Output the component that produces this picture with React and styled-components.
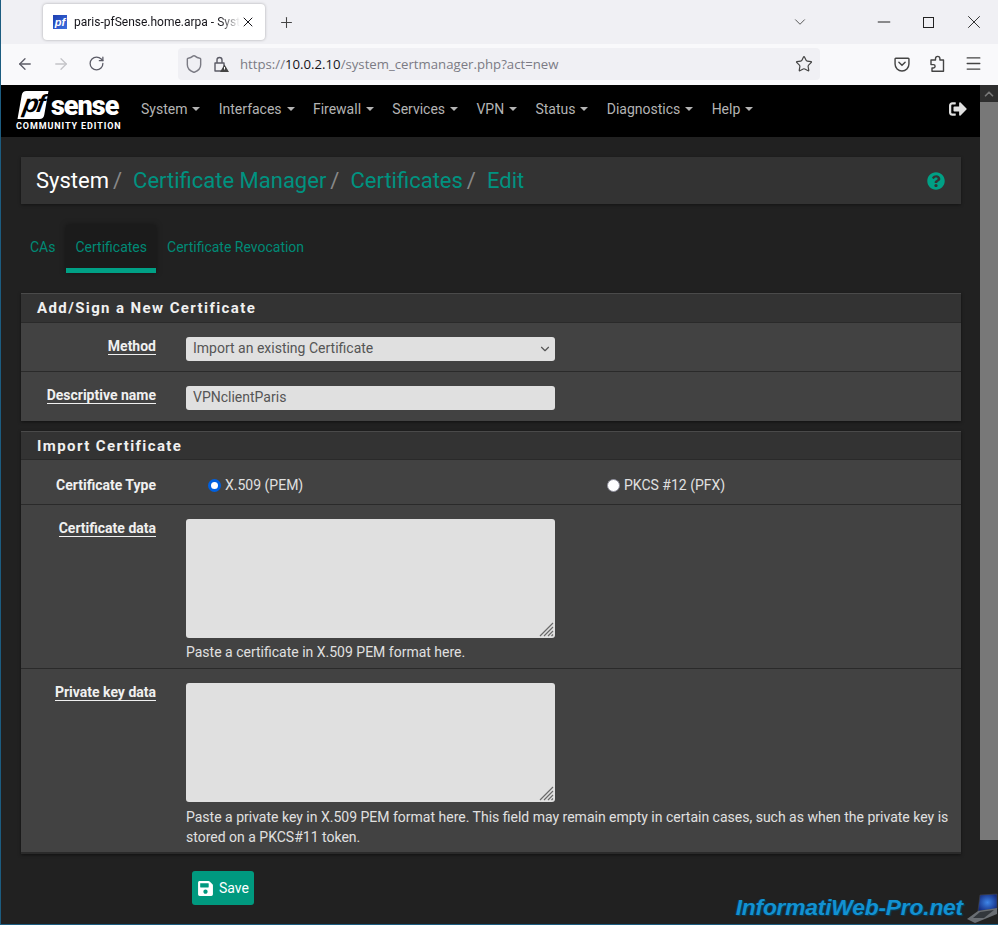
import React from 'react'
import styled, { createGlobalStyle } from 'styled-components'
import {
  ArrowLeft,
  ArrowRight,
  RotateCw,
  Shield,
  Star,
  Menu,
  Minus,
  X,
  ChevronDown,
  ChevronUp,
  Plus,
} from 'lucide-react'
import { FaSave, FaQuestionCircle, FaSignOutAlt } from 'react-icons/fa'

const Global = createGlobalStyle`
  html, body {
    margin: 0;
    height: 100%;
    overflow: hidden;
    background: #212121;
  }
  * { box-sizing: border-box; }
`

const Win = styled.div`
  width: 998px;
  height: 925px;
  display: flex;
  flex-direction: column;
  position: relative;
  overflow: hidden;
  border-left: 1px solid #1c5c80;
  border-bottom: 1px solid #1c5c80;
  font-family: Roboto, 'Liberation Sans', sans-serif;
`

const TabStrip = styled.div`
  height: 44px;
  flex: none;
  background: #f0f0f4;
  display: flex;
  align-items: center;
  padding: 0 0 0 42px;
`

const Tab = styled.div`
  width: 222px;
  height: 36px;
  background: #fff;
  border-radius: 4px;
  box-shadow: 0 0 3px rgba(0, 0, 0, 0.3);
  display: flex;
  align-items: center;
  padding: 0 9px 0 10px;
  color: #15141a;
`

const Favicon = styled.span`
  width: 14px;
  height: 14px;
  background: linear-gradient(135deg, #1d3fb0, #3d6fe0);
  color: #fff;
  font: italic bold 11px/14px 'Liberation Sans', sans-serif;
  text-align: center;
  flex: none;
`

const TabTitle = styled.span`
  flex: 1;
  min-width: 0;
  margin-left: 7px;
  font-size: 12px;
  font-family: Roboto, sans-serif;
  white-space: nowrap;
  -webkit-mask-image: linear-gradient(to right, #000 88%, transparent);
  mask-image: linear-gradient(to right, #000 88%, transparent);
`

const NewTab = styled.span`
  margin-left: 13px;
  display: flex;
  color: #444;
`

const WindowControls = styled.div`
  margin-left: auto;
  margin-right: 2px;
  display: flex;
  align-items: center;
  color: #222;
`

const ListAll = styled.span`
  display: flex;
  margin-right: 52px;
  color: #555;
`

const WinButton = styled.span`
  width: 45px;
  display: flex;
  justify-content: center;
`

const MaxBox = styled.span`
  width: 11px;
  height: 11px;
  border: 1.3px solid #222;
`

const Toolbar = styled.div`
  height: 41px;
  flex: none;
  background: #f9f9fb;
  display: flex;
  align-items: center;
  padding: 0 0 2px 15px;
  color: #5b5b66;
`

const NavIcon = styled.span`
  display: flex;
  width: 36px;
  color: ${({ $off }) => ($off ? '#c4c4c8' : '#5b5b66')};
`

const UrlBar = styled.div`
  width: 642px;
  height: 32px;
  margin-left: 54px;
  background: #f0f0f4;
  border-radius: 4px;
  display: flex;
  align-items: center;
  padding: 0 7px 0 6px;
  font-family: 'Open Sans', sans-serif;
  font-size: 13.2px;
  color: #7b7b84;
`

const LockWrap = styled.span`
  display: flex;
  margin: 0 10px 0 8px;
`

const UrlHost = styled.span`
  color: #15141a;
`

const UrlStar = styled.span`
  margin-left: auto;
  display: flex;
  color: #444;
`

const ToolRight = styled.div`
  margin-left: auto;
  display: flex;
  align-items: center;
  gap: 18px;
  padding-right: 15px;
  color: #444;
`

const Viewport = styled.div`
  flex: 1;
  display: flex;
  min-height: 0;
`

const Page = styled.div`
  flex: 1;
  min-width: 0;
  background: #212121;
  display: flex;
  flex-direction: column;
  color: #e6e6e6;
  font-size: 14px;
`

const Navbar = styled.div`
  height: 52px;
  flex: none;
  background: #000;
  display: flex;
  align-items: center;
  padding: 0 13px 4px 14px;
`

const Logo = styled.div`
  width: 111px;
  margin-right: 15px;
  display: flex;
  flex-direction: column;
  align-items: flex-start;
  margin-top: 4px;
`

const LogoTop = styled.div`
  display: flex;
  align-items: center;
  height: 28px;
  margin-left: 5px;
`

const LogoBox = styled.span`
  background: #fff;
  color: #000;
  width: 26px;
  height: 28px;
  transform: skewX(-10deg);
  border-radius: 4px 0 4px 0;
  font: italic bold 25px/25px 'Liberation Sans', sans-serif;
  letter-spacing: -2px;
  text-align: center;
  flex: none;
`

const LogoWord = styled.span`
  color: #fff;
  font: 900 27px/28px Roboto, sans-serif;
  letter-spacing: -1px;
  margin-left: 5px;
  margin-top: 2px;
`

const LogoSub = styled.span`
  color: #fff;
  font-size: 9px;
  font-weight: 700;
  letter-spacing: 0.9px;
  line-height: 11px;
  margin: 2px 0 0 1px;
  white-space: nowrap;
`

const NavItem = styled.span`
  color: #b4b4b4;
  font-size: 14px;
  margin-right: 18.3px;
  display: flex;
  align-items: center;
  gap: 5px;

  &::after {
    content: '';
    border-top: 4px solid #b4b4b4;
    border-left: 4px solid transparent;
    border-right: 4px solid transparent;
  }
`

const Logout = styled.span`
  margin-left: auto;
  display: flex;
  color: #e0e0e0;
  font-size: 18px;
`

const Content = styled.div`
  flex: 1;
  min-width: 0;
  padding: 20px 19px 0 20px;
  display: flex;
  flex-direction: column;
`

const Crumbs = styled.div`
  height: 47px;
  background: #333;
  display: flex;
  align-items: center;
  padding: 0 16px 0 15px;
  font-size: 22px;
  box-shadow: 0 1px 3px rgba(0, 0, 0, 0.4);
`

const Crumb = styled.span`
  color: ${({ $root }) => ($root ? '#fff' : '#009280')};

  &:not(:last-of-type)::after {
    content: '/';
    color: #888;
    margin: 0 11px 0 4px;
  }
`

const Help = styled.div`
  margin-left: auto;
  display: flex;
  color: #00a085;
  font-size: 18px;
`

const Tabs = styled.div`
  height: 48px;
  margin: 21px 0 20px;
  display: flex;
`

const TabLink = styled.span`
  color: #008a76;
  font-size: 14px;
  padding: 14px 11px 0 ${({ $first }) => ($first ? 9 : 11)}px;
  ${({ $active }) =>
    $active &&
    `
    background: #1b1b1b;
    border-bottom: 5px solid #00a085;
    box-shadow: 0 0 6px rgba(0, 0, 0, 0.4);
    padding: 14px 9px 0 9px;
  `}
`

const Panel = styled.section`
  background: #424242;
  margin-bottom: 10px;
  box-shadow: 0 1px 3px rgba(0, 0, 0, 0.5);
`

const PanelHead = styled.h2`
  margin: 0;
  height: ${({ $h }) => $h || 29}px;
  background: #333;
  color: #f0f0f0;
  font-size: 15px;
  font-weight: 700;
  letter-spacing: 1.4px;
  line-height: 28px;
  padding-left: 16px;
  border-top: 1px solid #4a4a4a;
  border-bottom: 1px solid #2a2a2a;
`

const Row = styled.div`
  display: flex;
  min-height: ${({ $h }) => $h}px;
  border-bottom: 1px solid #2a2a2a;
  padding-top: ${({ $pt }) => $pt ?? 14}px;

  &:last-child {
    border-bottom: ${({ $end }) => ($end ? '2px solid #2a2a2a' : 'none')};
  }
`

const Label = styled.div`
  width: 135px;
  flex: none;
  text-align: right;
  font-size: 14px;
  font-weight: 700;
  color: #f0f0f0;
  line-height: 18px;
`

const Under = styled.span`
  border-bottom: 1px solid #f0f0f0;
`

const Field = styled.div`
  margin-left: 30px;
  flex: 1;
  min-width: 0;
  padding-right: 12px;
`

const SelectWrap = styled.div`
  position: relative;
  width: 369px;
  height: 24px;
`

const Select = styled.select`
  width: 100%;
  height: 100%;
  appearance: none;
  border: none;
  border-radius: 3px;
  background: #e0e0e0;
  color: #555;
  font: 14px Roboto, sans-serif;
  padding: 0 7px 2px;
`

const SelectArrow = styled.span`
  position: absolute;
  right: 3px;
  top: 5px;
  display: flex;
  color: #555;
  pointer-events: none;
`

const Input = styled.input`
  width: 369px;
  height: 24px;
  border: none;
  border-radius: 3px;
  background: #e0e0e0;
  color: #555;
  font: 14px Roboto, sans-serif;
  padding: 0 7px 2px;
`

const AreaWrap = styled.div`
  position: relative;
  width: 369px;
  height: 119px;
`

const Area = styled.textarea`
  display: block;
  width: 100%;
  height: 100%;
  border: none;
  border-radius: 3px;
  background: #e0e0e0;
  resize: none;
`

const Grip = styled.svg`
  position: absolute;
  right: 1px;
  bottom: 1px;
  pointer-events: none;
`

const Hint = styled.div`
  font-size: 14px;
  line-height: 20px;
  color: #e0e0e0;
  margin-top: ${({ $mt }) => $mt ?? 5}px;
`

const RadioRow = styled.div`
  display: flex;
  padding-left: 22px;
`

const RadioItem = styled.label`
  flex: none;
  width: 399px;
  display: flex;
  align-items: center;
  gap: 4px;
  font-size: 14px;
  color: #e0e0e0;
  height: 18px;

  & + & {
    width: auto;
  }
`

const Radio = styled.input`
  appearance: none;
  margin: 0;
  width: 13px;
  height: 13px;
  border-radius: 50%;
  background: #fff;
  border: ${({ checked }) => (checked ? '3.5px solid #0060df' : '1px solid #8f8f9d')};
  flex: none;
`

const SaveBar = styled.div`
  padding: 7px 0 0 171px;
`

const SaveBtn = styled.button`
  width: 62px;
  height: 34px;
  background: #00997f;
  border: none;
  border-radius: 3px;
  color: #fff;
  font: 400 14px Roboto, sans-serif;
  display: flex;
  align-items: center;
  gap: 5px;
  padding: 0 0 0 5px;
`

const SaveIcon = styled.span`
  display: flex;
  font-size: 17px;
`

const Scroll = styled.div`
  width: 18px;
  flex: none;
  background: #212121;
  display: flex;
  flex-direction: column;
  align-items: center;
  color: #777;
`

const ScrollUp = styled.span`
  height: 17px;
  width: 100%;
  background: #2e2e2e;
  display: flex;
  align-items: center;
  justify-content: center;
`

const Thumb = styled.div`
  width: 100%;
  height: 738px;
  background: #787878;
`

const Mark = styled.div`
  position: absolute;
  right: 0;
  bottom: 0;
  display: flex;
  align-items: flex-end;
  gap: 3px;
`

const MarkText = styled.span`
  color: #1391d1;
  font: italic bold 22.8px/30px 'Liberation Sans', sans-serif;
  text-shadow: 1px 1px 1px #07405e, -1px 0 1px #07405e;
  letter-spacing: -0.2px;
  margin-bottom: 2px;
`

const LockIcon = () => (
  <svg width="18" height="18" viewBox="0 0 18 18" fill="none" stroke="#5b5b66" strokeWidth="1.4">
    <path d="M3 8h9v8H3z" strokeLinejoin="round" />
    <path d="M5 8V5a2.500 2.500 0 0 1 5 0v3" />
    <path d="M12.500 9.500l4.500 7.500H8z" fill="#444" stroke="none" />
    <path d="M12.500 12v2.500" stroke="#fff" strokeWidth="1" />
  </svg>
)

const PocketIcon = () => (
  <svg width="16" height="16" viewBox="0 0 18 18" fill="none" stroke="#444" strokeWidth="1.6">
    <path d="M2 2.500h14a.8.8 0 0 1 .8.8V9A7.800 7.800 0 0 1 1.200 9V3.300a.8.8 0 0 1 .8-.8z" />
    <path d="M5.500 7 9 10.500 12.500 7" strokeLinecap="round" />
  </svg>
)

const ExtIcon = () => (
  <svg width="18" height="18" viewBox="0 0 18 18" fill="none" stroke="#444" strokeWidth="1.4" strokeLinejoin="round">
    <path d="M7.500 5V3.600a2.200 2.200 0 0 1 4.400 0V5h3.600v11.300H4v-3.300h1.400a1.700 1.700 0 0 0 0-3.400H3V5z" />
  </svg>
)

const LaptopIcon = () => (
  <svg width="32" height="32" viewBox="0 0 32 32">
    <defs>
      <radialGradient id="screen" cx="0.5" cy="0.5" r="0.6">
        <stop offset="0" stopColor="#3f86e8" />
        <stop offset="1" stopColor="#12287e" />
      </radialGradient>
    </defs>
    <path d="M14 3l17-1v15l-19 2z" fill="url(#screen)" stroke="#444" strokeWidth="0.6" />
    <path d="M1 27l11-8 19-3v6L9 31z" fill="#6a6e73" />
    <path d="M7 26l7-6 14-2-10 8z" fill="#33373c" />
  </svg>
)

const GripIcon = () => (
  <Grip width="15" height="15" viewBox="0 0 15 15" stroke="#6a6a6a" strokeWidth="1.200">
    <path d="M1 14 14 1M5 14 14 5M9 14l5-5M12.500 14 14 12.500" />
  </Grip>
)

const NAV = ['System', 'Interfaces', 'Firewall', 'Services', 'VPN', 'Status', 'Diagnostics', 'Help']

const App = () => (
  <Win>
    <Global />
    <TabStrip>
      <Tab>
        <Favicon>pf</Favicon>
        <TabTitle>paris-pfSense.home.arpa - Syste</TabTitle>
        <X size={16} strokeWidth={1.5} />
      </Tab>
      <NewTab>
        <Plus size={17} strokeWidth={1.5} />
      </NewTab>
      <WindowControls>
        <ListAll>
          <ChevronDown size={18} strokeWidth={1.3} />
        </ListAll>
        <WinButton>
          <Minus size={20} strokeWidth={1.2} />
        </WinButton>
        <WinButton>
          <MaxBox />
        </WinButton>
        <WinButton>
          <X size={22} strokeWidth={1} />
        </WinButton>
      </WindowControls>
    </TabStrip>
    <Toolbar>
      <NavIcon>
        <ArrowLeft size={18} strokeWidth={1.7} />
      </NavIcon>
      <NavIcon $off>
        <ArrowRight size={18} strokeWidth={1.7} />
      </NavIcon>
      <NavIcon>
        <RotateCw size={17} strokeWidth={1.8} />
      </NavIcon>
      <UrlBar>
        <Shield size={20} strokeWidth={1.7} />
        <LockWrap>
          <LockIcon />
        </LockWrap>
        https://<UrlHost>10.0.2.10</UrlHost>/system_certmanager.php?act=new
        <UrlStar>
          <Star size={18} strokeWidth={1.6} />
        </UrlStar>
      </UrlBar>
      <ToolRight>
        <PocketIcon />
        <ExtIcon />
        <Menu size={19} strokeWidth={1.6} />
      </ToolRight>
    </Toolbar>
    <Viewport>
      <Page>
        <Navbar>
          <Logo>
            <LogoTop>
              <LogoBox>pf</LogoBox>
              <LogoWord>sense</LogoWord>
            </LogoTop>
            <LogoSub>COMMUNITY EDITION</LogoSub>
          </Logo>
          {NAV.map(n => (
            <NavItem key={n}>{n}</NavItem>
          ))}
          <Logout>
            <FaSignOutAlt />
          </Logout>
        </Navbar>
        <Content>
          <Crumbs>
            <Crumb $root>System</Crumb>
            <Crumb>Certificate Manager</Crumb>
            <Crumb>Certificates</Crumb>
            <Crumb>Edit</Crumb>
            <Help>
              <FaQuestionCircle />
            </Help>
          </Crumbs>
          <Tabs>
            <TabLink $first>CAs</TabLink>
            <TabLink $active>Certificates</TabLink>
            <TabLink>Certificate Revocation</TabLink>
          </Tabs>
          <Panel>
            <PanelHead $h={30}>Add/Sign a New Certificate</PanelHead>
            <Row $h={49}>
              <Label>
                <Under>Method</Under>
              </Label>
              <Field>
                <SelectWrap>
                  <Select defaultValue="import">
                    <option value="import">Import an existing Certificate</option>
                  </Select>
                  <SelectArrow>
                    <ChevronDown size={14} strokeWidth={2} />
                  </SelectArrow>
                </SelectWrap>
              </Field>
            </Row>
            <Row $h={49}>
              <Label>
                <Under>Descriptive name</Under>
              </Label>
              <Field>
                <Input defaultValue="VPNclientParis" />
              </Field>
            </Row>
          </Panel>
          <Panel>
            <PanelHead>Import Certificate</PanelHead>
            <Row $h={45} $pt={16}>
              <Label>Certificate Type</Label>
              <Field>
                <RadioRow>
                  <RadioItem>
                    <Radio type="radio" name="t" checked readOnly />
                    X.509 (PEM)
                  </RadioItem>
                  <RadioItem>
                    <Radio type="radio" name="t" checked={false} readOnly />
                    PKCS #12 (PFX)
                  </RadioItem>
                </RadioRow>
              </Field>
            </Row>
            <Row $h={164}>
              <Label>
                <Under>Certificate data</Under>
              </Label>
              <Field>
                <AreaWrap>
                  <Area />
                  <GripIcon />
                </AreaWrap>
                <Hint $mt={4}>Paste a certificate in X.509 PEM format here.</Hint>
              </Field>
            </Row>
            <Row $h={185} $end>
              <Label>
                <Under>Private key data</Under>
              </Label>
              <Field>
                <AreaWrap>
                  <Area />
                  <GripIcon />
                </AreaWrap>
                <Hint>
                  Paste a private key in X.509 PEM format here. This field may remain empty in certain
                  cases, such as when the private key is stored on a PKCS#11 token.
                </Hint>
              </Field>
            </Row>
          </Panel>
          <SaveBar>
            <SaveBtn>
              <SaveIcon>
                <FaSave />
              </SaveIcon>
              Save
            </SaveBtn>
          </SaveBar>
        </Content>
      </Page>
      <Scroll>
        <ScrollUp>
          <ChevronUp size={14} strokeWidth={3} />
        </ScrollUp>
        <Thumb />
      </Scroll>
    </Viewport>
    <Mark>
      <MarkText>InformatiWeb-Pro.net</MarkText>
      <LaptopIcon />
    </Mark>
  </Win>
)

export default App
